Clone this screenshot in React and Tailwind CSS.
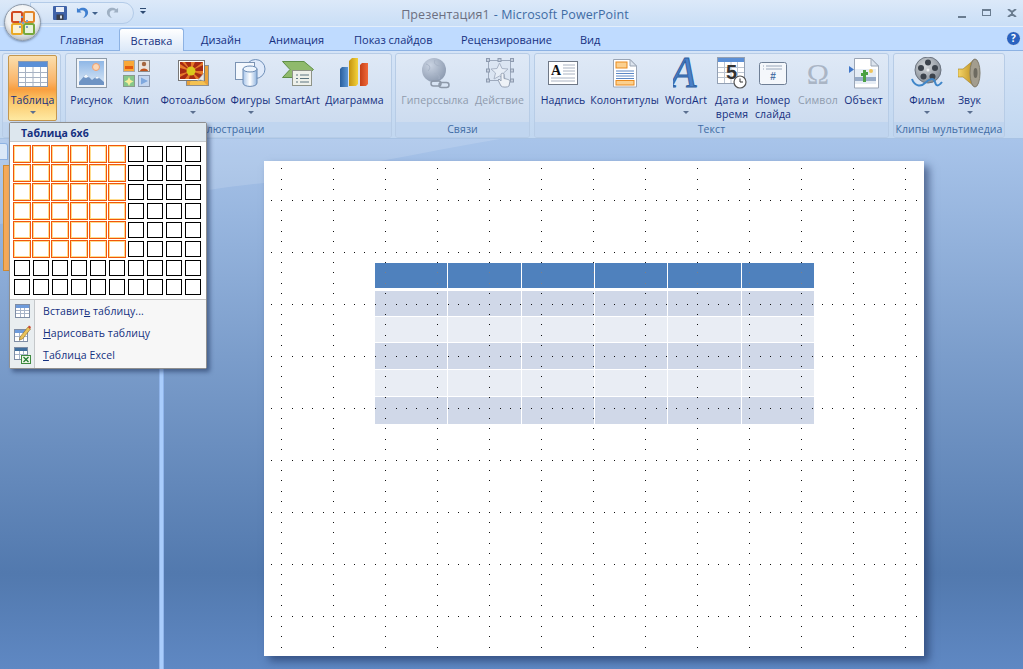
import React from "react";

const FONT = "font-['Open_Sans','Noto_Sans',sans-serif]";

// ---- ribbon icons ----
const TableIcon = () => (
  <svg width="30" height="26" viewBox="0 0 30 26">
    <rect x="0.5" y="0.5" width="29" height="25" fill="#fff" stroke="#8a97ab" />
    <rect x="1" y="1" width="28" height="5" fill="#5b8fd6" />
    <path d="M1 11.5h28M1 16.5h28M1 21.5h28M7.5 6v19M15 6v19M22.5 6v19" stroke="#a7b2c3" />
  </svg>
);

const PictureIcon = () => (
  <svg width="31" height="31" viewBox="0 0 31 31">
    <rect x="0.5" y="0.5" width="30" height="29" fill="#f2f5f9" stroke="#8d9aa8" />
    <defs>
      <linearGradient id="sky" x1="0" y1="0" x2="0" y2="1">
        <stop offset="0" stopColor="#8fb7e6" />
        <stop offset="1" stopColor="#dbe9f7" />
      </linearGradient>
    </defs>
    <rect x="3" y="3" width="25" height="24" fill="url(#sky)" />
    <circle cx="20" cy="9" r="3.5" fill="#fbd7b5" stroke="#f0a070" />
    <path d="M3 24l7-8 6 6 5-4 7 6v3H3z" fill="#6f94c4" />
    <path d="M10 16l-2.500 3 2.500 1 2-1 1.500 .5zM21 18l-2 2 2 .8 2-.8 1 .5z" fill="#f1f6fb" />
  </svg>
);

const ClipIcon = () => (
  <svg width="27" height="27" viewBox="0 0 27 27">
    <rect x="0.5" y="0.5" width="11" height="11" fill="#f8a838" stroke="#a9a9a9" />
    <rect x="2" y="6" width="8" height="3" fill="#e25b10" />
    <rect x="15.500" y="0.5" width="11" height="11" fill="#e9e3dc" stroke="#8a8a8a" />
    <circle cx="21" cy="4" r="2.200" fill="#a5673f" />
    <path d="M17 11c0-3.500 8-3.500 8 0z" fill="#c2541d" />
    <rect x="0.5" y="15.500" width="11" height="11" fill="#86c78a" stroke="#8a9a8a" />
    <path d="M6 17l1.500 3 3 1.500-3 1.500-1.500 3-1.500-3-3-1.500 3-1.500z" fill="#f5ee9a" />
    <rect x="15.500" y="15.500" width="11" height="11" fill="#c4d6ef" stroke="#8d9ab0" />
    <path d="M18 17.500l7 3.500-7 3.500z" fill="#7fa8de" />
  </svg>
);

const AlbumIcon = () => (
  <svg width="31" height="26" viewBox="0 0 31 26">
    <rect x="8.500" y="5.500" width="22" height="20" fill="#e9a23a" stroke="#8f8f8f" />
    <path d="M12 22l8-6 9 9H12z" fill="#f5c252" />
    <rect x="0.5" y="0.5" width="26" height="20" fill="#fff" stroke="#777" />
    <rect x="2" y="2" width="23" height="17" fill="#a62a14" />
    <path d="M13 11L2 4v4zM13 11L2 14v3zM13 11l-6 8h4zM13 11l5 8h4zM13 11l12 4v-4zM13 11l12-6v-3zM13 11l4-9h-4zM13 11L7 2H4z" fill="#e5792a" />
    <circle cx="13" cy="11" r="4.500" fill="#d9c71c" />
    <path d="M26 13l-7 8 3.500-1 3.500 1z" fill="#e8e8e8" stroke="#909090" strokeWidth=".5" />
  </svg>
);

const ShapesIcon = () => (
  <svg width="31" height="28" viewBox="0 0 31 28">
    <defs>
      <linearGradient id="cyl" x1="0" y1="0" x2="1" y2="0">
        <stop offset="0" stopColor="#a9c6ea" />
        <stop offset=".5" stopColor="#fff" />
        <stop offset="1" stopColor="#8fb4e0" />
      </linearGradient>
    </defs>
    <circle cx="20.500" cy="10" r="9.500" fill="#dfeafa" stroke="#6f8fb8" />
    <rect x="0.5" y="3.500" width="19" height="17" fill="#f4f8fd" stroke="#7b93b3" />
    <path d="M8 10v14c0 4.500 14 4.500 14 0V10z" fill="url(#cyl)" stroke="#6a8ab3" />
    <ellipse cx="15" cy="10" rx="7" ry="3" fill="#eef5fd" stroke="#6a8ab3" />
  </svg>
);

const SmartArtIcon = () => (
  <svg width="32" height="25" viewBox="0 0 32 25">
    <path d="M0.500 0.500H22l9.500 8-9.500 8H0.500L8 8.500z" fill="#8fba6c" stroke="#5f8f47" />
    <rect x="10.500" y="9.500" width="19" height="15" fill="#eef0ea" stroke="#8e9388" />
    <path d="M14 14h2M18 14h9M14 17.500h2M18 17.500h9M14 21h2M18 21h9" stroke="#5c7580" />
  </svg>
);

const ChartIcon = () => (
  <svg width="29" height="30" viewBox="0 0 29 30">
    <defs>
      <linearGradient id="bb" x1="0" y1="0" x2="1" y2="0">
        <stop offset="0" stopColor="#2a5e9c" />
        <stop offset="1" stopColor="#5c97d6" />
      </linearGradient>
      <linearGradient id="by" x1="0" y1="0" x2="1" y2="0">
        <stop offset="0" stopColor="#c59310" />
        <stop offset="1" stopColor="#f3d23b" />
      </linearGradient>
      <linearGradient id="br" x1="0" y1="0" x2="1" y2="0">
        <stop offset="0" stopColor="#c53f17" />
        <stop offset="1" stopColor="#f0693a" />
      </linearGradient>
    </defs>
    <path d="M0 11l2-2h6v20H0z" fill="url(#bb)" />
    <path d="M20 7l2-2h6v21l-2 2h-6z" fill="url(#br)" />
    <path d="M9 3l3-3h6v26l-2 2H9z" fill="url(#by)" />
  </svg>
);

const GlobeIcon = () => (
  <svg width="31" height="31" viewBox="0 0 31 31">
    <defs>
      <radialGradient id="gl" cx=".35" cy=".3" r=".8">
        <stop offset="0" stopColor="#c9d3e2" />
        <stop offset="1" stopColor="#8997ad" />
      </radialGradient>
    </defs>
    <circle cx="14" cy="12" r="12" fill="url(#gl)" />
    <path d="M6 6c4 1 5 4 2 7M15 2c-2 4 2 6 6 6M14 16c3-1 6 1 5 5" stroke="#a7b3c6" fill="none" />
    <rect x="11" y="23" width="10" height="5" rx="2.500" fill="none" stroke="#8d98a8" strokeWidth="1.500" />
    <rect x="19" y="24.500" width="10" height="5" rx="2.500" fill="none" stroke="#8d98a8" strokeWidth="1.500" />
  </svg>
);

const ActionIcon = () => (
  <svg width="28" height="30" viewBox="0 0 28 30">
    <rect x="2.500" y="2.500" width="22" height="20" fill="#dbe5f2" stroke="#9eaabd" />
    <path d="M13.500 5l2.500 5.500 6 .5-4.500 4 1.500 6-5.500-3-5.500 3 1.500-6-4.500-4 6-.5z" fill="#e6edf6" stroke="#a9b4c6" />
    <g fill="#c4cedd" stroke="#8e9bb0">
      <rect x="0.500" y="0.500" width="3" height="3" />
      <rect x="12" y="0.500" width="3" height="3" />
      <rect x="24.500" y="0.500" width="3" height="3" />
      <rect x="0.500" y="11" width="3" height="3" />
      <rect x="24.500" y="11" width="3" height="3" />
      <rect x="0.500" y="21" width="3" height="3" />
      <rect x="24.500" y="21" width="3" height="3" />
    </g>
    <path d="M15 16v7l-2-2-1 1 3 6c1 1.500 7 1.500 8 0l1-5c0-1-3-2-6-2.500V16c0-1-3-1-3 0z" fill="#eef2f7" stroke="#97a3b6" />
  </svg>
);

const TextBoxIcon = () => (
  <svg width="31" height="25" viewBox="0 0 31 25">
    <rect x="0.500" y="0.500" width="29" height="23" fill="#fff" stroke="#6f7886" />
    <text x="3" y="14" fontFamily="Liberation Serif" fontSize="14" fontWeight="700" fill="#111">A</text>
    <path d="M15 4h12M15 7h12M15 10h12M15 13h12M3 17h24M3 20h24" stroke="#aab3c2" />
  </svg>
);

const HeaderFooterIcon = () => (
  <svg width="24" height="29" viewBox="0 0 24 29">
    <path d="M0.500 0.500H17L23.500 7v21H0.500z" fill="#fff" stroke="#9aa5b5" />
    <path d="M17 0.500V7h6.500z" fill="#dce4ee" stroke="#9aa5b5" />
    <rect x="3" y="3" width="11" height="6" fill="#fbd08f" stroke="#e98a1d" />
    <path d="M3 12h18M3 14.500h18M3 17h18M3 19.500h18" stroke="#5c88c6" />
    <rect x="3" y="21.500" width="18" height="4.500" fill="#fbd08f" stroke="#e98a1d" />
  </svg>
);

const WordArtIcon = () => (
  <svg width="26" height="32" viewBox="0 0 26 32">
    <text
      transform="translate(-3 30) scale(1.2 1.25)"
      fontFamily="Liberation Serif"
      fontStyle="italic"
      fontSize="36"
      fill="#4a80c8"
      stroke="#2f5f9f"
      strokeWidth=".8"
    >
      A
    </text>
  </svg>
);

const DateIcon = () => (
  <svg width="30" height="32" viewBox="0 0 30 32">
    <rect x="0.500" y="0.500" width="27" height="26" fill="#fff" stroke="#93a0b3" />
    <rect x="1" y="1" width="26" height="4" fill="#5b8fd6" />
    <path d="M1 10.500h26M1 15.500h26M1 20.500h26M7.500 5v21M14 5v21M20.500 5v21" stroke="#bcc5d2" />
    <text x="9" y="22" fontFamily="Liberation Sans" fontSize="20" fontWeight="700" fill="#333">5</text>
    <circle cx="23" cy="25" r="6" fill="#fff" stroke="#555" strokeWidth="1.200" />
    <path d="M23 21.500V25h3" fill="none" stroke="#333" />
  </svg>
);

const NumberIcon = () => (
  <svg width="28" height="23" viewBox="0 0 28 23">
    <rect x="0.500" y="0.500" width="27" height="22" rx="2" fill="#f4f7fb" stroke="#6f7f95" />
    <path d="M4 4h1M7 4h16M4 7h1M7 7h16" stroke="#98a6ba" />
    <text x="14" y="18" textAnchor="middle" fontFamily="Liberation Sans" fontSize="10" fontWeight="700" fill="#4c71a5">#</text>
  </svg>
);

const OmegaIcon = () => (
  <svg width="28" height="34" viewBox="0 0 28 34">
    <text x="14" y="28" textAnchor="middle" fontFamily="Liberation Serif" fontSize="30" fill="#aab5c5">Ω</text>
  </svg>
);

const ObjectIcon = () => (
  <svg width="31" height="31" viewBox="0 0 31 31">
    <path d="M6.500 0.500H23L30.500 8v22H6.500z" fill="#fff" stroke="#9aa5b5" />
    <path d="M23 0.500V8h7.500z" fill="#dce4ee" stroke="#9aa5b5" />
    <rect x="7" y="11" width="21" height="15" fill="#e6edf5" />
    <rect x="7" y="19" width="21" height="4" fill="#98acc8" />
    <path d="M15 24v-6h-2v-3h2v-3h3v2h2v3h-2v7z" fill="#4aa043" />
    <circle cx="23" cy="13" r="2" fill="#efc35a" />
    <path d="M1 8l5 3.500L1 15z" fill="#3f76c8" />
  </svg>
);

const FilmIcon = () => (
  <svg width="33" height="32" viewBox="0 0 33 32">
    <defs>
      <radialGradient id="reel" cx=".4" cy=".35" r=".8">
        <stop offset="0" stopColor="#d4d8dc" />
        <stop offset="1" stopColor="#747c86" />
      </radialGradient>
    </defs>
    <circle cx="17" cy="13" r="13" fill="url(#reel)" stroke="#6c7480" />
    <circle cx="17" cy="5.500" r="3" fill="#3c434c" />
    <circle cx="24" cy="11" r="3" fill="#3c434c" />
    <circle cx="21.500" cy="19.500" r="3" fill="#3c434c" />
    <circle cx="12.500" cy="19.500" r="3" fill="#3c434c" />
    <circle cx="10" cy="11" r="3" fill="#3c434c" />
    <circle cx="17" cy="13" r="1.500" fill="#eef0f2" />
    <path d="M1 22c2 6 8 9 13 4s9-5 10-1 3 5 7 0" fill="none" stroke="#3f86c9" strokeWidth="2" />
  </svg>
);

const SoundIcon = () => (
  <svg width="24" height="30" viewBox="0 0 24 30">
    <defs>
      <linearGradient id="spk" x1="0" y1="0" x2="1" y2="0">
        <stop offset="0" stopColor="#f6d66a" />
        <stop offset="1" stopColor="#b88a1a" />
      </linearGradient>
    </defs>
    <path d="M0 11h5L17 1v28L5 19H0z" fill="url(#spk)" stroke="#a27f20" strokeWidth=".6" />
    <ellipse cx="17" cy="15" rx="5" ry="14" fill="#a39d8e" stroke="#7f7a6c" />
    <ellipse cx="17.500" cy="15" rx="2" ry="5" fill="#6d6a60" />
  </svg>
);

const OfficeButton = () => (
  <div className="absolute left-[4px] top-[4px] w-[37px] h-[37px] rounded-full bg-[radial-gradient(circle_at_50%_35%,#ffffff_0%,#eef0f2_55%,#aab1b9_86%,#dfe3e7_100%)] border border-[#8d99a8] shadow-[0_1px_2px_rgba(60,80,110,.5)] flex items-center justify-center">
    <svg width="24" height="24" viewBox="0 0 24 24">
      <rect x="1" y="1" width="10" height="10" rx="1.500" fill="#f7e9dc" stroke="#d14a22" strokeWidth="2" />
      <rect x="13" y="1" width="10" height="10" rx="1.500" fill="#f8efdf" stroke="#e3862a" strokeWidth="2" />
      <rect x="1" y="13" width="10" height="10" rx="1.500" fill="#fbf2d6" stroke="#eaa925" strokeWidth="2" />
      <rect x="13" y="13" width="10" height="10" rx="1.500" fill="#eaf3dc" stroke="#77a83c" strokeWidth="2" />
      <g fill="#7f9fcb">
        <rect x="10" y="5" width="2" height="2" />
        <rect x="15" y="9" width="2" height="2" />
        <rect x="8" y="10" width="2" height="2" />
        <rect x="15" y="15" width="2" height="2" />
        <rect x="8" y="15" width="2" height="2" />
        <rect x="11" y="11" width="2" height="2" />
      </g>
    </svg>
  </div>
);

const QuickAccess = () => (
  <div className="absolute left-[30px] top-[2px] w-[104px] h-[22px] rounded-r-full bg-[linear-gradient(#e2edfa,#cfe0f5)] border border-[#b3cbe8] flex items-center pl-[22px]">
    <svg width="14" height="14" viewBox="0 0 14 14">
      <rect width="14" height="14" rx="1" fill="#3f62a8" />
      <rect x="3" y="1" width="8" height="5" fill="#e9eef7" />
      <rect x="3.500" y="8.500" width="7" height="5.500" fill="#3a3f4b" />
      <rect x="7" y="9.500" width="2" height="3" fill="#d7dde7" />
    </svg>
    <svg className="ml-[9px]" width="13" height="14" viewBox="0 0 14 14">
      <path d="M1 1.500v5h5L4 4.500c3-1.500 6.500 0 6 3.500-.3 2-1.500 3.500-3 4.500 3.500-.5 6-3 6-6C13 2 7.500-.5 3 3z" fill="#3f7fd0" />
    </svg>
    <span className="ml-[3px] w-0 h-0 border-x-[3px] border-x-transparent border-t-[3px] border-t-[#40618c]" />
    <svg className="ml-[8px]" width="13" height="14" viewBox="0 0 14 14">
      <path d="M13 1.500v5H8L10 4.500C7 3 3.500 4.500 4 8c.3 2 1.500 3.500 3 4.500C3.500 12 1 9.500 1 6.500 1 2 6.500-.5 11 3z" fill="#9fb0c3" />
    </svg>
  </div>
);

const TitleBar = () => (
  <div className="relative h-[27px] bg-[linear-gradient(#dce9f9,#c9def6)] border-b border-[#e3eefb]">
    <QuickAccess />
    <div className="absolute left-[140px] top-[8px] flex flex-col items-center gap-[2px]">
      <span className="w-[6px] h-[1px] bg-[#2d4a72]" />
      <span className="w-0 h-0 border-x-[3px] border-x-transparent border-t-[3px] border-t-[#2d4a72]" />
    </div>
    <div className="flex justify-center pt-[6px] pl-[7px] text-[12.5px] leading-[18px] tracking-[0.1px]">
      <span className="text-[#6c6f80]">Презентация1</span>
      <span className="text-[#3f6ca4] ml-[4px]">- Microsoft PowerPoint</span>
    </div>
    {/* window controls */}
    <div className="absolute left-[958px] top-[9px] flex items-start">
      <span className="w-[8px] h-[2px] mt-[7px] bg-[#6a7c90]" />
      <span className="ml-[16px] w-[9px] h-[7px] border border-t-2 border-[#6a7c90]" />
      <svg className="ml-[16px]" width="10" height="8" viewBox="0 0 10 8">
        <path d="M1 0l4 3 4-3M1 8l4-3 4 3M5 3v2" fill="none" stroke="#6a7c90" strokeWidth="2" />
      </svg>
    </div>
  </div>
);

const TabBar = () => {
  const tabs = [
    { label: "Главная", cls: "ml-[60px] w-[59px]" },
    { label: "Вставка", cls: "" },
    { label: "Дизайн", cls: "ml-[17px] w-[68px]" },
    { label: "Анимация", cls: "w-[85px]" },
    { label: "Показ слайдов", cls: "w-[107px]" },
    { label: "Рецензирование", cls: "w-[119px]" },
    { label: "Вид", cls: "w-[40px]" },
  ];
  return (
    <div className="relative h-[24px] bg-[#bfdbff] border-b border-[#8db2e3] flex items-end text-[11px] text-[#15307f]">
      {tabs.map((tab) =>
        tab.label === "Вставка" ? (
          <div
            key={tab.label}
            className="w-[65px] h-[23px] -mb-[1px] pt-[4px] text-center rounded-t-[3px] border border-b-0 border-[#8db2e3] bg-[linear-gradient(#ffffff,#dbe8f8)]"
          >
            {tab.label}
          </div>
        ) : (
          <div key={tab.label} className={`${tab.cls} h-[22px] pt-[4px]`}>
            {tab.label}
          </div>
        )
      )}
      <div className="absolute left-[1006px] top-[4px] w-[15px] h-[15px] rounded-full bg-[#2a62c0] border border-[#d5e4f7] text-white text-[10px] leading-[13px] font-bold text-center">
        ?
      </div>
    </div>
  );
};

const DownArrow = ({ muted }) => (
  <span
    className={`block mx-auto w-0 h-0 border-x-[3px] border-x-transparent border-t-[3px] ${
      muted ? "border-t-[#9aa6b8]" : "border-t-[#5a6f90]"
    }`}
  />
);

const RibbonButton = ({ width, icon, lines, arrow, disabled }) => (
  <div className={`${width} shrink-0 flex flex-col items-center`}>
    <div className="h-[38px] flex items-center justify-center">{icon}</div>
    <div
      className={`mt-[1px] text-center whitespace-nowrap text-[10.5px] leading-[14px] tracking-[0.1px] ${
        disabled ? "text-[#8f9bad]" : "text-[#15307f]"
      }`}
    >
      {lines.map((line) => (
        <div key={line}>{line}</div>
      ))}
    </div>
    {arrow && (
      <div className="mt-[4px] w-full">
        <DownArrow />
      </div>
    )}
  </div>
);

const Group = ({ width, left, label, children }) => (
  <div
    className={`${width} ${left} h-[85px] shrink-0 flex flex-col rounded-[3px] border border-[#b7cce6] bg-[linear-gradient(#dfe9f6,#c9d9ee)] overflow-hidden`}
  >
    <div className="flex-1 flex">{children}</div>
    <div className="h-[15px] bg-[#c0d5ef] text-center whitespace-nowrap text-[10.5px] leading-[15px] tracking-[0.1px] text-[#3f6ca4]">
      {label}
    </div>
  </div>
);

const Ribbon = () => (
  <div className="h-[88px] bg-[linear-gradient(#d5e4f7,#c1d7f0)] border-b border-[#a8c3e4] flex pt-[2px] pl-[2px]">
    {/* label of this group sits behind the open menu */}
    <Group width="w-[59px]" left="" label="">
      <div className="ml-[5px] mt-[1px] w-[49px] h-[66px] flex flex-col items-center rounded-[2px] border border-[#c4974f] bg-[linear-gradient(#fbdfae_0%,#fab468_40%,#f99e3f_52%,#fbc769_70%,#fee9a2_100%)]">
        <div className="h-[31px] pt-[5px]">
          <TableIcon />
        </div>
        <div className="mt-[6px] text-[10.5px] leading-[14px] tracking-[0.1px] text-[#15307f]">Таблица</div>
        <div className="mt-[4px] w-full">
          <DownArrow />
        </div>
      </div>
    </Group>
    <Group width="w-[327px]" left="ml-[4px]" label="Иллюстрации">
      <div className="flex pl-[2px]">
        <RibbonButton width="w-[47px]" icon={<PictureIcon />} lines={["Рисунок"]} />
        <RibbonButton width="w-[42px]" icon={<ClipIcon />} lines={["Клип"]} />
        <RibbonButton width="w-[72px]" icon={<AlbumIcon />} lines={["Фотоальбом"]} arrow />
        <RibbonButton width="w-[43px]" icon={<ShapesIcon />} lines={["Фигуры"]} arrow />
        <RibbonButton width="w-[51px]" icon={<SmartArtIcon />} lines={["SmartArt"]} />
        <RibbonButton width="w-[63px]" icon={<ChartIcon />} lines={["Диаграмма"]} />
      </div>
    </Group>
    <Group width="w-[135px]" left="ml-[3px]" label="Связи">
      <div className="flex pl-[3px]">
        <RibbonButton width="w-[72px]" icon={<GlobeIcon />} lines={["Гиперссылка"]} disabled />
        <RibbonButton width="w-[57px]" icon={<ActionIcon />} lines={["Действие"]} disabled />
      </div>
    </Group>
    <Group width="w-[355px]" left="ml-[4px]" label="Текст">
      <div className="flex pl-[3px]">
        <RibbonButton width="w-[50px]" icon={<TextBoxIcon />} lines={["Надпись"]} />
        <RibbonButton width="w-[73px]" icon={<HeaderFooterIcon />} lines={["Колонтитулы"]} />
        <RibbonButton width="w-[50px]" icon={<WordArtIcon />} lines={["WordArt"]} arrow />
        <RibbonButton width="w-[42px]" icon={<DateIcon />} lines={["Дата и", "время"]} />
        <RibbonButton width="w-[40px]" icon={<NumberIcon />} lines={["Номер", "слайда"]} />
        <RibbonButton width="w-[50px]" icon={<OmegaIcon />} lines={["Символ"]} disabled />
        <RibbonButton width="w-[41px]" icon={<ObjectIcon />} lines={["Объект"]} />
      </div>
    </Group>
    <Group width="w-[112px]" left="ml-[4px]" label="Клипы мультимедиа">
      <div className="flex pl-[11px]">
        <RibbonButton width="w-[44px]" icon={<FilmIcon />} lines={["Фильм"]} arrow />
        <RibbonButton width="w-[41px]" icon={<SoundIcon />} lines={["Звук"]} arrow />
      </div>
    </Group>
  </div>
);

// ---- insert table dropdown ----
const TableMenu = () => {
  const cells = [];
  for (let row = 0; row < 8; row++) {
    for (let col = 0; col < 10; col++) {
      cells.push({ id: `${row}-${col}`, selected: row < 6 && col < 6 });
    }
  }
  const items = [
    { icon: <MenuTableIcon />, text: <>Вставит<u>ь</u> таблицу...</> },
    { icon: <MenuDrawIcon />, text: <><u>Н</u>арисовать таблицу</> },
    { icon: <MenuExcelIcon />, text: <><u>Т</u>аблица Excel</> },
  ];
  return (
    <div className="absolute left-[9px] top-[122px] w-[198px] h-[247px] bg-white border border-[#8f8f8f] rounded-[2px] shadow-[3px_3px_4px_rgba(30,50,90,.55)] flex flex-col z-10">
      <div className="h-[19px] bg-[#dde7ee] border-b border-[#c5c9cd] pl-[11px] text-[10.5px] leading-[20px] font-bold text-[#15307f]">
        Таблица 6x6
      </div>
      <div className="grid grid-cols-[repeat(10,19px)] grid-rows-[repeat(8,19px)] pl-[3px] pt-[3px]">
        {cells.map((cell) =>
          cell.selected ? (
            <div key={cell.id} className="w-[18px] h-[18px] bg-white border border-[#f1570d] shadow-[inset_0_0_0_1px_#ffdc8c]" />
          ) : (
            <div key={cell.id} className="ml-[1px] mt-[1px] w-[16px] h-[16px] bg-white border border-black" />
          )
        )}
      </div>
      <div className="mt-[2px] flex-1 border-t border-[#c5c5c5] bg-[#f7f7f7] flex flex-col relative">
        <div className="absolute left-0 top-0 bottom-0 w-[25px] bg-[#e9eef0] border-r border-[#c5c8ca]" />
        {items.map((item, index) => (
          <div key={index} className="relative h-[22px] flex items-center text-[10.5px] tracking-[0.1px] text-[#15307f]">
            <div className="w-[25px] flex justify-center">{item.icon}</div>
            <span className="ml-[8px] mt-[1px]">{item.text}</span>
          </div>
        ))}
      </div>
    </div>
  );
};

function MenuTableIcon() {
  return (
    <svg width="15" height="14" viewBox="0 0 15 14">
      <rect x="0.500" y="0.500" width="14" height="13" fill="#fff" stroke="#7e8da5" />
      <rect x="1" y="1" width="13" height="3" fill="#6d9bdb" />
      <path d="M1 6.500h13M1 9.500h13M5.500 4v9M9.500 4v9" stroke="#a7b4c8" />
    </svg>
  );
}

function MenuDrawIcon() {
  return (
    <svg width="17" height="17" viewBox="0 0 17 17">
      <rect x="0.500" y="4.500" width="13" height="12" fill="#fff" stroke="#7e8da5" />
      <rect x="1" y="5" width="12" height="3" fill="#6d9bdb" />
      <path d="M1 11.500h12M5.500 8v8M9.500 8v8" stroke="#a7b4c8" />
      <path d="M6 12l8-10 2.500 2-8 10-3 1z" fill="#e9c25a" stroke="#8f6a20" strokeWidth=".6" />
      <path d="M14 2l1-1.500 2 1.500-1 2z" fill="#c9482f" />
    </svg>
  );
}

function MenuExcelIcon() {
  return (
    <svg width="17" height="17" viewBox="0 0 17 17">
      <rect x="0.500" y="0.500" width="13" height="12" fill="#fff" stroke="#7e8da5" />
      <rect x="1" y="1" width="12" height="3" fill="#3f6f9f" />
      <path d="M1 7.500h12M5.500 4v8M9.500 4v8" stroke="#a7b4c8" />
      <rect x="7.500" y="8.500" width="9" height="8" fill="#eef7e6" stroke="#3f8a3f" />
      <path d="M9.500 10l5 5M14.500 10l-5 5" stroke="#1f7a2e" strokeWidth="1.200" />
    </svg>
  );
}

// ---- slide ----
const SLIDE_X = 264;
const SLIDE_Y = 161;

function buildDots() {
  const offsetsX = [0, 11, 21, 31, 42];
  const offsetsY = [0, 10, 20, 31, 41];
  const dots = [];
  for (let x = 281 - 52; x <= 905; x += 52) {
    for (const dx of offsetsX) {
      const px = x + dx;
      if (px < 271 || px > 916) continue;
      for (let r = 0; r <= 8; r++) dots.push([px, 200 + 52 * r]);
    }
  }
  for (let c = 0; c <= 12; c++) {
    for (let y = 148; y <= 616; y += 52) {
      for (const dy of offsetsY) {
        const py = y + dy;
        if (py < 168 || py > 647) continue;
        dots.push([281 + 52 * c, py]);
      }
    }
    dots.push([281 + 52 * c, 647]);
  }
  return dots;
}

const DotGrid = () => {
  const dots = buildDots();
  const inHeader = ([x, y]) => x >= 375 && x < 814 && y >= 263 && y < 288;
  const toPath = (list) =>
    list.map(([x, y]) => `M${x - SLIDE_X} ${y - SLIDE_Y}h1v1h-1z`).join("");
  return (
    <svg className="absolute inset-0" width="660" height="495" shapeRendering="crispEdges">
      <path d={toPath(dots.filter((d) => !inHeader(d)))} fill="#111" />
      <path d={toPath(dots.filter(inHeader))} fill="#7d7f86" />
    </svg>
  );
};

const SlideTable = () => {
  const rows = [
    { h: "h-[25px]", bg: "bg-[#4f81bd]", gap: "mb-[3px]" },
    { h: "h-[25px]", bg: "bg-[#d0d8e8]", gap: "mb-[1px]" },
    { h: "h-[25px]", bg: "bg-[#e9edf4]", gap: "mb-[1px]" },
    { h: "h-[26px]", bg: "bg-[#d0d8e8]", gap: "mb-[1px]" },
    { h: "h-[26px]", bg: "bg-[#e9edf4]", gap: "mb-[1px]" },
    { h: "h-[27px]", bg: "bg-[#d0d8e8]", gap: "" },
  ];
  const cols = ["w-[72px]", "w-[73px]", "w-[72px]", "w-[72px]", "w-[73px]", "w-[72px]"];
  return (
    <div className="w-[439px] flex flex-col">
      {rows.map((row, r) => (
        <div key={r} className={`flex gap-[1px] ${row.gap}`}>
          {cols.map((w, c) => (
            <div key={c} className={`${w} ${row.h} ${row.bg}`} />
          ))}
        </div>
      ))}
    </div>
  );
};

const Slide = () => (
  <div className="relative w-[660px] h-[495px] bg-white shadow-[5px_5px_8px_rgba(30,50,95,.6)] pl-[111px] pt-[102px]">
    <SlideTable />
    <DotGrid />
  </div>
);

const Workspace = () => (
  <div className="relative flex h-[530px] overflow-hidden bg-[linear-gradient(#a8c4ea_0%,#7b9dcb_41%,#5279ae_82%,#5f88c3_100%)]">
    <svg className="absolute inset-0" width="1023" height="530">
      <path d="M0 85C100 70 200 50 264 44 340 30 420 14 500 0H0z" fill="#fff" fillOpacity=".14" />
    </svg>
    {/* left thumbnails pane, mostly behind the menu */}
    <div className="relative w-[159px] shrink-0 pt-[4px]">
      <div className="w-[8px] h-[17px] rounded-tr-[3px] bg-[#dbe8f8] border border-l-0 border-[#8db2e3]" />
      <div className="ml-[3px] mt-[5px] w-[7px] h-[106px] border border-[#d08a30] bg-[#f4a95a]" />
    </div>
    <div className="relative w-[5px] shrink-0 bg-[#a9cdfc] border-x border-[#8fb4ea]" />
    <div className="relative pl-[100px] pt-[22px]">
      <Slide />
    </div>
  </div>
);

export default function App() {
  return (
    <div className={`relative w-[1023px] h-[669px] overflow-hidden ${FONT}`}>
      <TitleBar />
      <TabBar />
      <Ribbon />
      <Workspace />
      <OfficeButton />
      <TableMenu />
    </div>
  );
}
